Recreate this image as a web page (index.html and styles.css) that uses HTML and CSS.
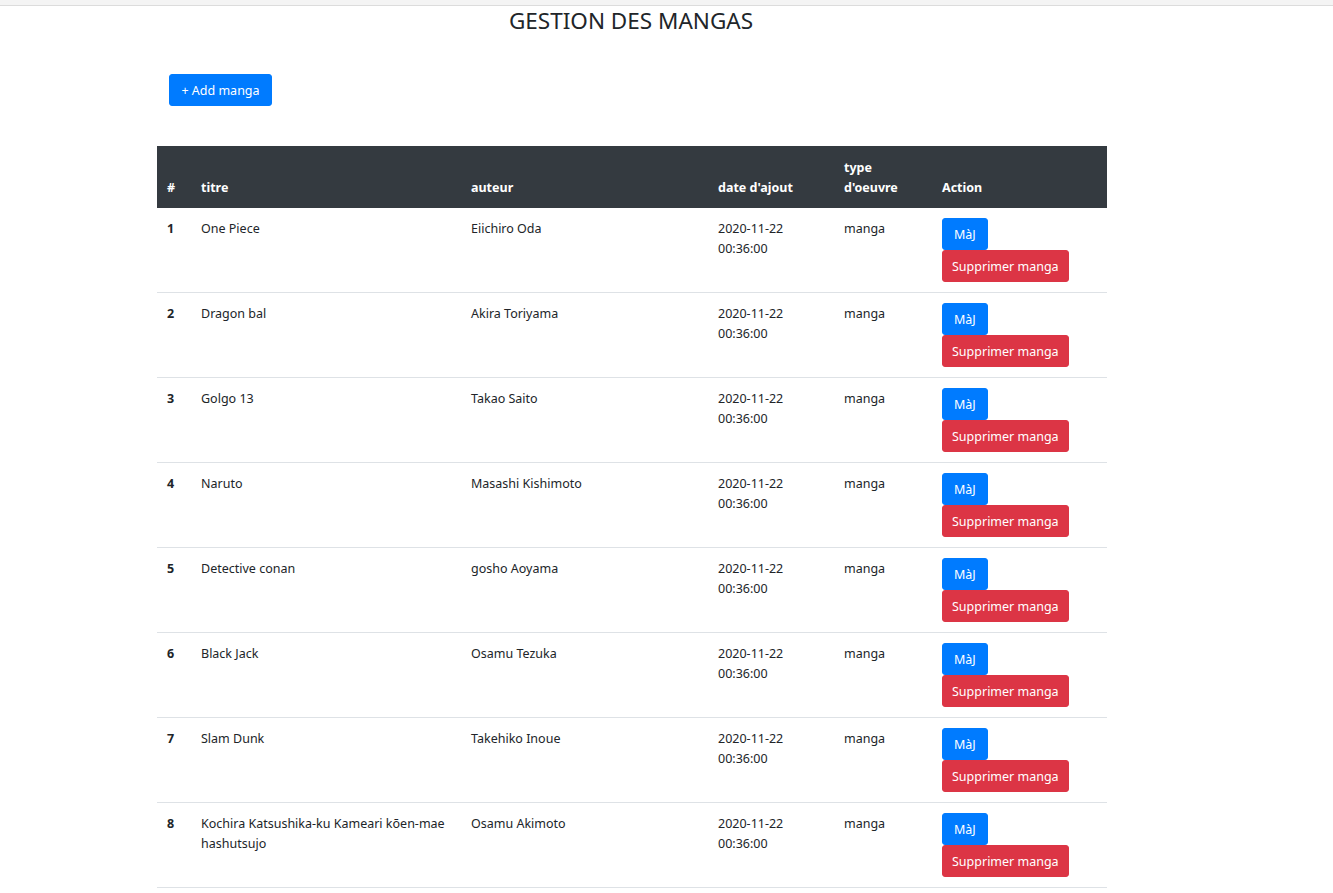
FILE: index.html
```html
<!DOCTYPE html>
<html lang="fr">
<head>
<meta charset="utf-8">
<title>Gestion des mangas</title>
<link rel="stylesheet" href="styles.css">
</head>
<body>
<div class="topbar"></div>
<h1 class="title">GESTION DES MANGAS</h1>
<div class="content">
  <div class="add-wrap"><button class="btn btn-primary btn-add">+ Add manga</button></div>
  <table class="table">
    <thead>
      <tr>
        <th class="c-num">#</th>
        <th class="c-titre">titre</th>
        <th class="c-auteur">auteur</th>
        <th class="c-date">date d'ajout</th>
        <th class="c-type">type<br>d'oeuvre</th>
        <th class="c-action">Action</th>
      </tr>
    </thead>
    <tbody>
      <tr><th>1</th><td>One Piece</td><td>Eiichiro Oda</td><td>2020-11-22<br>00:36:00</td><td>manga</td><td class="act"><div class="actions"><button class="btn btn-primary btn-maj">MàJ</button><button class="btn btn-danger">Supprimer manga</button></div></td></tr>
      <tr><th>2</th><td>Dragon bal</td><td>Akira Toriyama</td><td>2020-11-22<br>00:36:00</td><td>manga</td><td class="act"><div class="actions"><button class="btn btn-primary btn-maj">MàJ</button><button class="btn btn-danger">Supprimer manga</button></div></td></tr>
      <tr><th>3</th><td>Golgo 13</td><td>Takao Saito</td><td>2020-11-22<br>00:36:00</td><td>manga</td><td class="act"><div class="actions"><button class="btn btn-primary btn-maj">MàJ</button><button class="btn btn-danger">Supprimer manga</button></div></td></tr>
      <tr><th>4</th><td>Naruto</td><td>Masashi Kishimoto</td><td>2020-11-22<br>00:36:00</td><td>manga</td><td class="act"><div class="actions"><button class="btn btn-primary btn-maj">MàJ</button><button class="btn btn-danger">Supprimer manga</button></div></td></tr>
      <tr><th>5</th><td>Detective conan</td><td>gosho Aoyama</td><td>2020-11-22<br>00:36:00</td><td>manga</td><td class="act"><div class="actions"><button class="btn btn-primary btn-maj">MàJ</button><button class="btn btn-danger">Supprimer manga</button></div></td></tr>
      <tr><th>6</th><td>Black Jack</td><td>Osamu Tezuka</td><td>2020-11-22<br>00:36:00</td><td>manga</td><td class="act"><div class="actions"><button class="btn btn-primary btn-maj">MàJ</button><button class="btn btn-danger">Supprimer manga</button></div></td></tr>
      <tr><th>7</th><td>Slam Dunk</td><td>Takehiko Inoue</td><td>2020-11-22<br>00:36:00</td><td>manga</td><td class="act"><div class="actions"><button class="btn btn-primary btn-maj">MàJ</button><button class="btn btn-danger">Supprimer manga</button></div></td></tr>
      <tr><th>8</th><td>Kochira Katsushika-ku Kameari kōen-mae hashutsujo</td><td>Osamu Akimoto</td><td>2020-11-22<br>00:36:00</td><td>manga</td><td class="act"><div class="actions"><button class="btn btn-primary btn-maj">MàJ</button><button class="btn btn-danger">Supprimer manga</button></div></td></tr>
    </tbody>
  </table>
</div>
</body>
</html>
```
FILE: styles.css
```css
* { box-sizing: border-box; }
html, body { margin: 0; padding: 0; }
body {
  font-family: "Noto Sans", "Open Sans", sans-serif;
  font-size: 12.5px;
  line-height: 20px;
  color: #212529;
  background: #fff;
}
.topbar {
  height: 6px;
  background: #f4f4f4;
  border-bottom: 1px solid #dcdcdc;
}
.title {
  margin: 3px 0 0;
  width: 1262px;
  text-align: center;
  font-weight: 400;
  font-size: 22.5px;
  line-height: 24px;
  color: #212529;
}
.content {
  margin-left: 157px;
  width: 950px;
}
.add-wrap {
  padding: 41px 0 0 12px;
  height: 113px;
}
.btn {
  display: inline-block;
  border: 1px solid transparent;
  border-radius: 3px;
  color: #fff;
  font-family: inherit;
  font-size: 12.5px;
  line-height: 20px;
  height: 32px;
  padding: 6px 9px 4px;
  cursor: pointer;
}
.btn-primary { background: #007bff; border-color: #007bff; }
.btn-danger { background: #dc3545; border-color: #dc3545; }
.btn-maj { padding-left: 11px; padding-right: 11px; }
.btn-add { width: 103px; padding-left: 0; padding-right: 0; text-align: center; }
.table {
  width: 950px;
  border-collapse: collapse;
  table-layout: fixed;
}
.table th, .table td {
  padding: 11px 10px 9px;
  text-align: left;
  vertical-align: top;
  border-bottom: 1px solid #dee2e6;
}
.table td.act { padding-top: 10px; padding-bottom: 10px; }
.table thead th {
  background: #343a40;
  color: #fff;
  font-weight: 700;
  vertical-align: bottom;
  padding-top: 11px;
  padding-bottom: 9px;
  border-bottom: 1px solid #343a40;
  height: 61px;
}
.table tbody th { font-weight: 700; }
.c-num { width: 34px; }
.c-titre { width: 270px; }
.c-auteur { width: 247px; }
.c-date { width: 126px; }
.c-type { width: 98px; }
.c-action { width: 175px; }
.table tbody tr { height: 85px; }
.actions {
  display: flex;
  flex-direction: column;
  align-items: flex-start;
}
```
